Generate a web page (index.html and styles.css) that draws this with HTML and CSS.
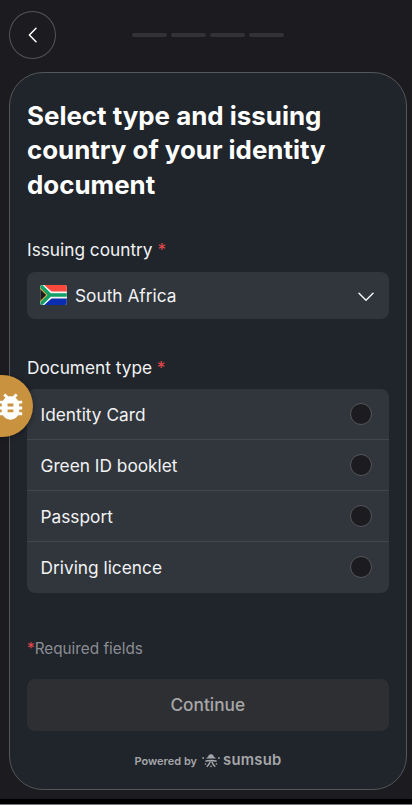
FILE: index.html
```html
<!DOCTYPE html>
<html lang="en">
<head>
<meta charset="utf-8">
<meta name="viewport" content="width=device-width, initial-scale=1">
<title>Identity document</title>
<link rel="stylesheet" href="styles.css">
</head>
<body>
<div class="app">
  <header class="topbar">
    <button class="back" aria-label="Back">
      <svg width="12" height="18" viewBox="0 0 12 18"><path d="M9 2.200 2.400 9l6.600 6.800"/></svg>
    </button>
    <div class="progress"><i></i><i></i><i></i><i></i></div>
  </header>
  <main class="card">
    <h1>Select type and issuing<br>country of your identity<br>document</h1>
    <div class="label issuing">Issuing country <span class="req">*</span></div>
    <div class="select">
      <svg class="flag" width="27" height="20" viewBox="0 0 27 20">
        <defs><clipPath id="f"><rect x=".3" width="26.500" height="20" rx="2.200"/></clipPath></defs>
        <g clip-path="url(#f)">
          <rect width="27" height="20" fill="#f4f4f2"/>
          <path fill="#f9493f" d="M3 0H27V6.400H11.500z"/>
          <path fill="#0b2db0" d="M3 20H27V13.600H11.500z"/>
          <path d="M-1-1 10.500 10-1 21M10.500 10H27" fill="none" stroke="#f4f4f2" stroke-width="6"/>
          <path fill="#1b1e20" stroke="#e3ae3c" stroke-width="1.500" d="M-1 2 7.200 10-1 18z"/>
          <path d="M-.5-.5 10 10-.5 20.500M10 10H27" fill="none" stroke="#12a069" stroke-width="3.500"/>
        </g>
      </svg>
      <span class="country">South Africa</span>
      <svg class="chevron" width="16" height="10" viewBox="0 0 16 10"><path d="M1 1.200 8 8.200l7-7"/></svg>
    </div>
    <div class="label doctype">Document type <span class="req">*</span></div>
    <ul class="options">
      <li><span>Identity Card</span><i class="radio"></i></li>
      <li><span>Green ID booklet</span><i class="radio"></i></li>
      <li><span>Passport</span><i class="radio"></i></li>
      <li><span>Driving licence</span><i class="radio"></i></li>
    </ul>
    <p class="required"><span class="req">*</span>Required fields</p>
    <button class="continue">Continue</button>
    <footer class="powered">
      <span class="by">Powered by</span>
      <svg class="mark" width="18" height="14" viewBox="0 0 18 14">
        <path d="M4 4.600C4.600 3.300 5.600 3.300 6.200 2.400 6.800 1.200 7.200.3 9 .3s2.200.9 2.800 2.100c.6.9 1.600.9 2.200 2.200z"/>
        <path class="line" d="M3.400 7.300C5 6.600 6.800 6.400 9 6.400s4 .2 5.600.9M8.300 6.800C7.800 9.300 6.700 11 4.800 12.700M9.700 6.800c.5 2.500 1.600 4.200 3.500 5.900"/>
        <circle cx="1.100" cy="4" r=".9"/><circle cx="16.900" cy="4" r=".9"/>
        <circle cx="3.500" cy="10" r=".8"/><circle cx="14.500" cy="10" r=".8"/>
        <circle cx="9" cy="12.400" r=".8"/>
      </svg>
      <span class="brand">sumsub</span>
    </footer>
  </main>
  <div class="strip"></div>
  <div class="debug">
    <svg width="35" height="35" viewBox="0 0 24 24"><path d="M20 8h-2.810c-.45-.78-1.070-1.450-1.820-1.960L17 4.410 15.590 3l-2.170 2.170C12.960 5.060 12.490 5 12 5s-.96.060-1.410.170L8.410 3 7 4.410l1.620 1.630C7.880 6.550 7.260 7.220 6.810 8H4v2h2.090c-.05.33-.09.66-.09 1v1H4v2h2v1c0 .34.040.67.090 1H4v2h2.810c1.040 1.790 2.970 3 5.190 3s4.150-1.210 5.190-3H20v-2h-2.090c.05-.33.090-.66.090-1v-1h2v-2h-2v-1c0-.34-.04-.67-.09-1H20V8zm-6 8h-4v-2h4v2zm0-4h-4v-2h4v2z"/></svg>
  </div>
</div>
</body>
</html>
```
FILE: styles.css
```css
* { box-sizing: border-box; }
html, body { margin: 0; height: 805px; overflow: hidden; background: #1c1b1f; }
body { font-family: Inter, "Liberation Sans", sans-serif; color: #f2f3f4; }
button { font: inherit; padding: 0; }
.app { position: relative; width: 412px; height: 805px; overflow: hidden; display: flex; flex-direction: column; }
.topbar { height: 71.5px; flex: none; padding: 11px 0 0 9px; display: flex; align-items: flex-start; }
.back { width: 47px; height: 48px; border: 1px solid #545357; border-radius: 50%; background: none; display: flex; align-items: center; justify-content: center; }
.back svg path { fill: none; stroke: #fff; stroke-width: 1.5; stroke-linecap: round; stroke-linejoin: round; }
.progress { display: flex; gap: 4px; margin: 22px 0 0 75.5px; }
.progress i { width: 35px; height: 4px; border-radius: 2px; background: #333237; }
.card { width: 397.5px; height: 718.5px; flex: none; margin: 0 0 0 9px; border: 1px solid #55565a; border-radius: 34px; background: #20242b; padding: 26px 17px 0 17px; display: flex; flex-direction: column; }
h1 { margin: 0; font-size: 25.9px; line-height: 34.7px; font-weight: 700; color: #fff; white-space: nowrap; }
.label { font-size: 17.25px; line-height: 24px; white-space: nowrap; }
.req { color: #e5484d; }
.issuing { margin-top: 35.7px; }
.select { height: 47.5px; margin-top: 9.3px; border-radius: 8px; background: #31353c; display: flex; align-items: center; padding: 0 14.5px 0 13px; font-size: 17.3px; }
.country { margin-left: 8px; flex: 1; }
.chevron { margin-top: 3px; }
.chevron path { fill: none; stroke: #f2f3f4; stroke-width: 1.5; stroke-linecap: round; stroke-linejoin: round; }
.doctype { margin-top: 36.5px; }
.options { list-style: none; margin: 9.5px 0 0; padding: 0; border-radius: 8px; background: #31353c; height: 204px; display: flex; flex-direction: column; }
.options li { height: 51px; flex: none; display: flex; align-items: center; justify-content: space-between; padding: .6px 17px 0 13.5px; font-size: 17.3px; border-bottom: 1px solid #42464d; }
.options li:last-child { border-bottom: 0; padding-top: 0; padding-bottom: .8px; }
.radio { width: 22px; height: 22px; border-radius: 50%; background: #1c1b1f; border: 1px solid #55565a; }
.required { margin: 45px 0 0; font-size: 15.3px; line-height: 22px; color: #8b8d92; }
.continue { height: 52px; flex: none; margin-top: 19px; padding-bottom: .5px; border: 0; border-radius: 8px; background: #2e2f32; color: #a6a7a9; font-size: 17.3px; font-weight: 500; }
.powered { display: flex; align-items: center; height: 18px; margin-top: 20.5px; padding-left: 107.5px; color: #a6a7aa; }
.by { font-size: 11px; font-weight: 600; white-space: nowrap; }
.mark { margin-left: 4.5px; fill: #a6a7aa; }
.mark .line { fill: none; stroke: #a6a7aa; stroke-width: 1.5; }
.brand { margin: -1px 0 0 3.5px; font: 600 14.8px Inter, sans-serif; letter-spacing: .25px; }
.strip { flex: none; margin-top: 8.5px; height: 6.5px; background: #000; border-bottom: 1px solid #77777a; }
.debug { position: absolute; left: -29.5px; top: 375px; width: 62px; height: 62px; border-radius: 50%; background: #c9923f; box-shadow: 0 1px 5px rgba(0,0,0,.35); padding: 13.5px 0 0 22.5px; }
.debug svg { display: block; fill: #fff; }
```
